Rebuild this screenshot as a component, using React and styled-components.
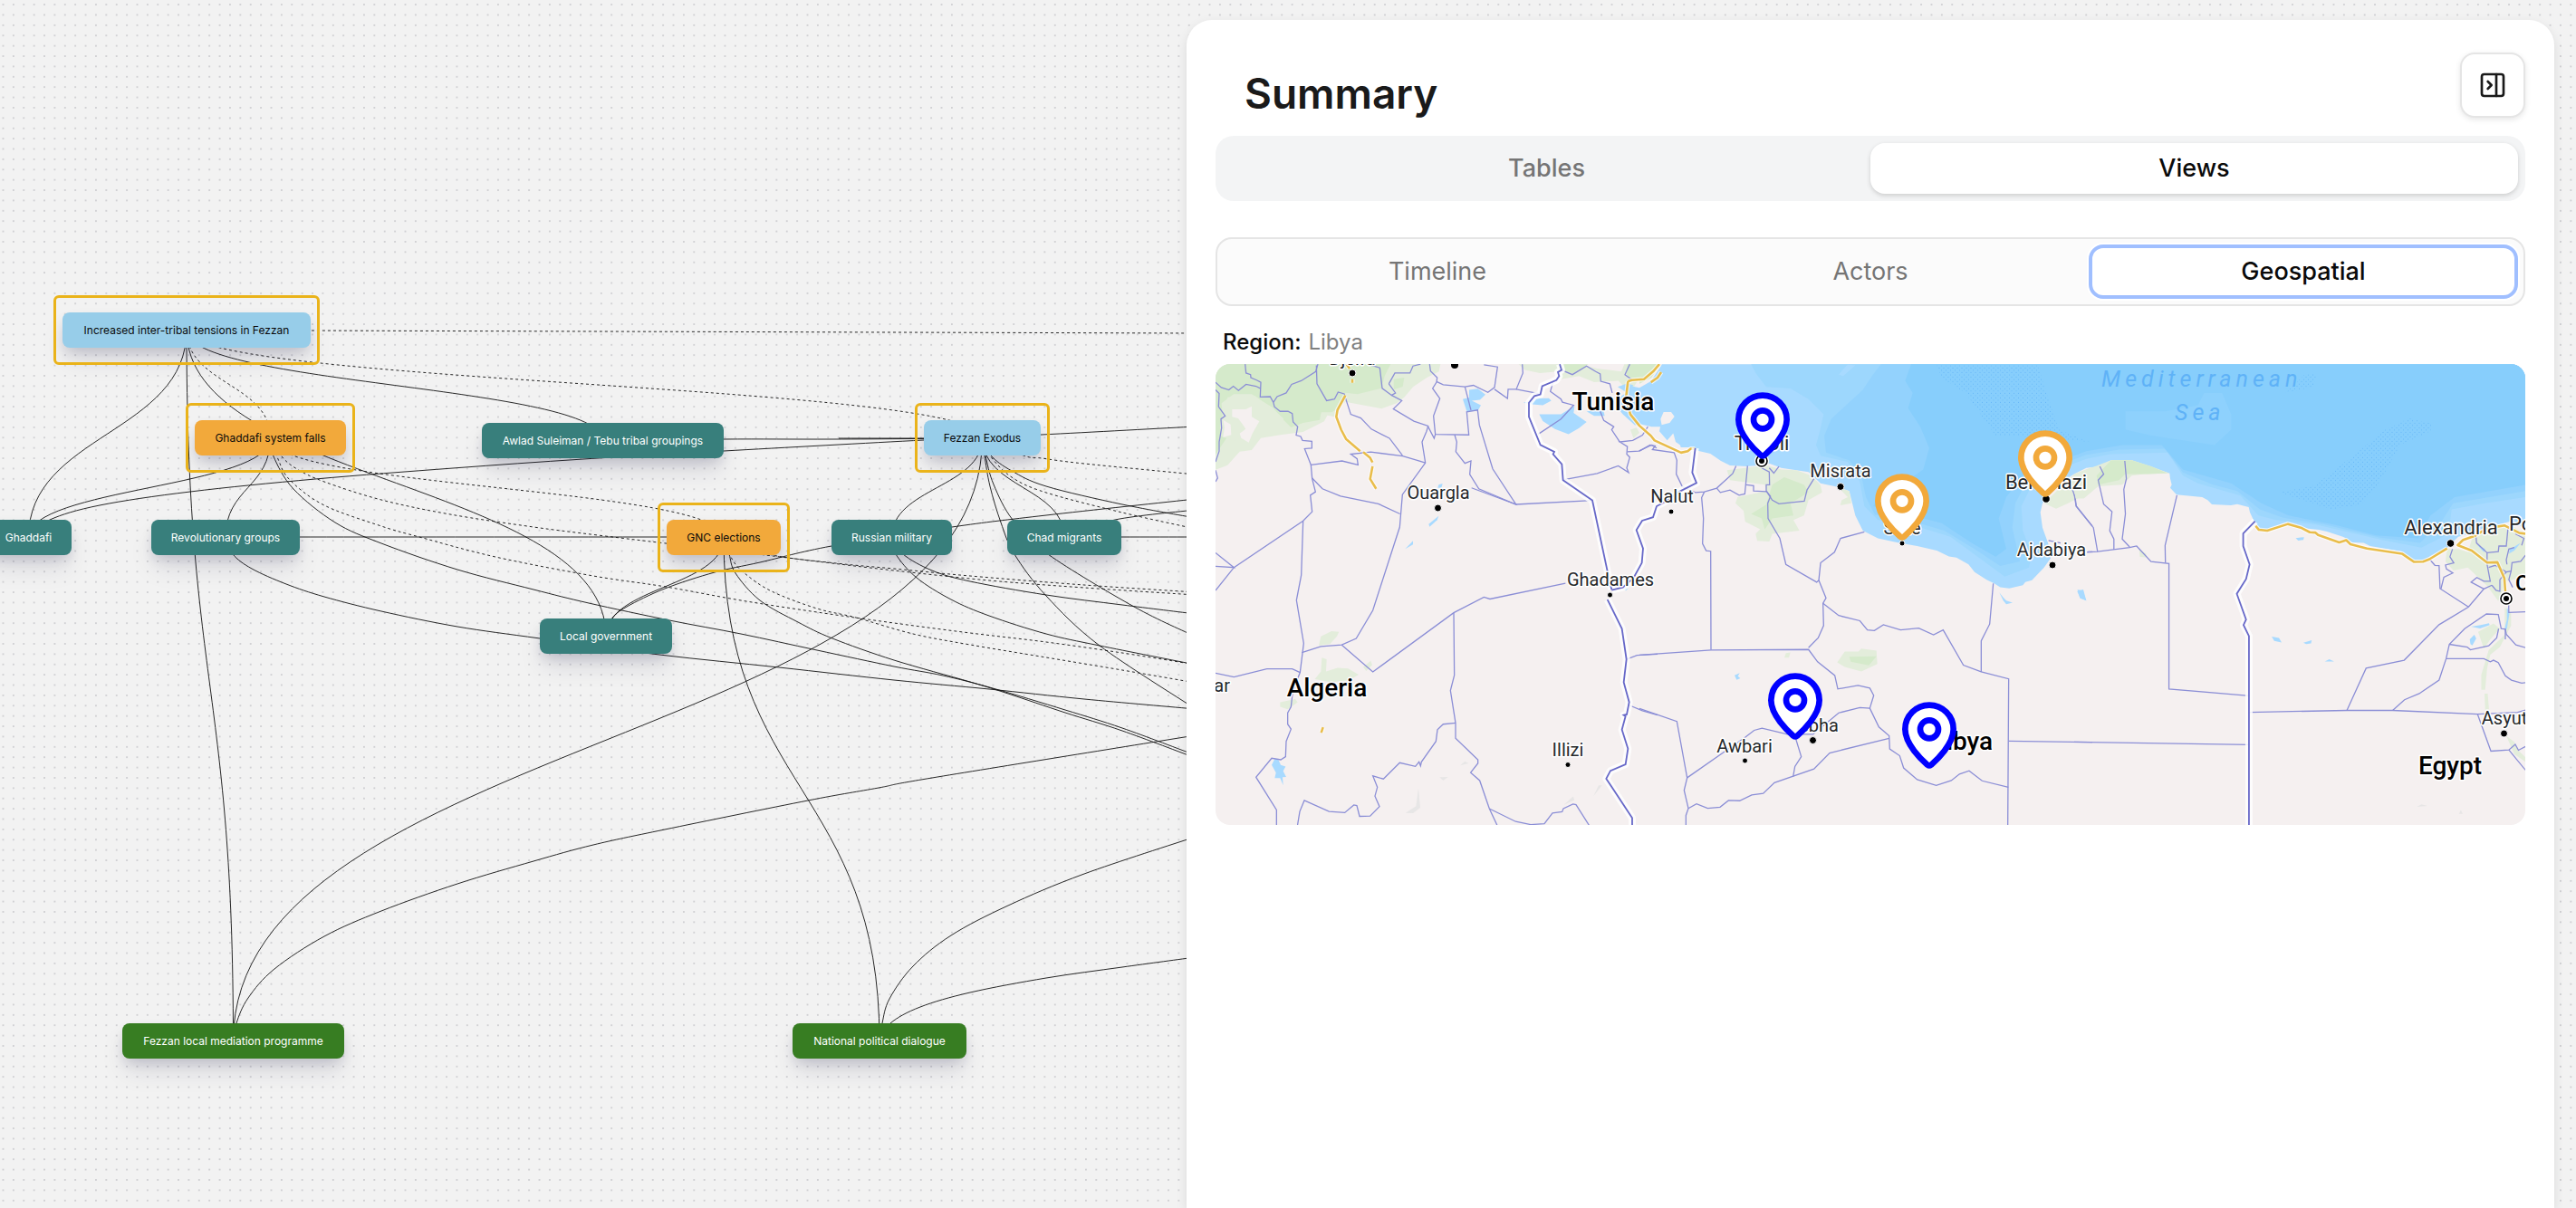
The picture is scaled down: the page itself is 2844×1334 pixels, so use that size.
import React, { useState } from "react";
import styled, { createGlobalStyle, css } from "styled-components";
import { MapPin, PanelRightClose } from "lucide-react";

const GlobalStyle = createGlobalStyle`
  *, *::before, *::after { box-sizing: border-box; }
  body {
    margin: 0;
    background: #f2f2f2;
    color: #0a0a0a;
    font-family: Inter, "Liberation Sans", sans-serif;
  }
  button { font: inherit; color: inherit; cursor: pointer; }
`;

const Page = styled.div`
  display: grid;
  height: 100vh;
  overflow: hidden;
`;

/* ---------- Canvas ---------- */

const Canvas = styled.section`
  grid-area: 1 / 1;
  position: relative;
  overflow: hidden;
  background: #f2f2f2;
`;

const Layer = styled.svg`
  position: absolute;
  inset: 0;
  width: 100%;
  height: 100%;
`;

const tones = {
  event: css`background: #97cde9; color: #0a0a0a;`,
  trigger: css`background: #f2a93b; color: #0a0a0a;`,
  actor: css`background: #387f7c; color: #ffffff;`,
  programme: css`background: #377d22; color: #ffffff;`,
};

const Node = styled.div`
  position: absolute;
  left: ${(p) => p.$x}px;
  top: ${(p) => p.$y}px;
  width: ${(p) => p.$w}px;
  height: 39px;
  display: flex;
  align-items: center;
  justify-content: center;
  border-radius: 8px;
  font-size: 12px;
  line-height: 16px;
  white-space: nowrap;
  box-shadow: 0 16px 28px -4px rgba(20, 20, 60, 0.13), 0 7px 14px -3px rgba(20, 20, 60, 0.16);
  ${(p) => tones[p.$tone]}
  ${(p) =>
    p.$selected &&
    css`
      &::after {
        content: "";
        position: absolute;
        inset: -19px -10px;
        border: 3px solid #eab31a;
        border-radius: 6px;
      }
    `}
`;

const nodes = [
  { id: "tensions", label: "Increased inter-tribal tensions in Fezzan", x: 69, y: 345, w: 274, tone: "event", selected: true },
  { id: "falls", label: "Ghaddafi system falls", x: 215, y: 464, w: 167, tone: "trigger", selected: true },
  { id: "awlad", label: "Awlad Suleiman / Tebu tribal groupings", x: 532, y: 467, w: 267, tone: "actor" },
  { id: "exodus", label: "Fezzan Exodus", x: 1020, y: 464, w: 129, tone: "event", selected: true },
  { id: "ghaddafi", label: "Ghaddafi", x: -16, y: 574, w: 95, tone: "actor" },
  { id: "groups", label: "Revolutionary groups", x: 167, y: 574, w: 164, tone: "actor" },
  { id: "gnc", label: "GNC elections", x: 736, y: 574, w: 126, tone: "trigger", selected: true },
  { id: "russian", label: "Russian military", x: 918, y: 574, w: 133, tone: "actor" },
  { id: "chad", label: "Chad migrants", x: 1112, y: 574, w: 126, tone: "actor" },
  { id: "local", label: "Local government", x: 596, y: 683, w: 146, tone: "actor" },
  { id: "mediation", label: "Fezzan local mediation programme", x: 135, y: 1130, w: 245, tone: "programme" },
  { id: "dialogue", label: "National political dialogue", x: 875, y: 1130, w: 192, tone: "programme" },
];

const center = (id) => {
  const n = nodes.find((item) => item.id === id);
  return [n.x + n.w / 2, n.y + 19.5];
};

const bezier = (from, to) => {
  const [sx, sy] = center(from);
  const [tx, ty] = center(to);
  const my = (sy + ty) / 2;
  return `M${sx},${sy}C${sx},${my} ${tx},${my} ${tx},${ty}`;
};

const spline = (pts) => {
  let d = `M${pts[0].join(",")}`;
  for (let i = 0; i < pts.length - 1; i += 1) {
    const p0 = pts[i - 1] || pts[i];
    const p1 = pts[i];
    const p2 = pts[i + 1];
    const p3 = pts[i + 2] || p2;
    d += `C${p1[0] + (p2[0] - p0[0]) / 6},${p1[1] + (p2[1] - p0[1]) / 6} ${p2[0] - (p3[0] - p1[0]) / 6},${p2[1] - (p3[1] - p1[1]) / 6} ${p2[0]},${p2[1]}`;
  }
  return d;
};

const links = [
  ["tensions", "ghaddafi"], ["tensions", "mediation"], ["tensions", "local"], ["tensions", "awlad"],
  ["tensions", "falls", true], ["tensions", "exodus", true],
  ["falls", "ghaddafi"], ["falls", "groups"], ["falls", "gnc", true],
  ["gnc", "local"], ["gnc", "dialogue"],
  ["exodus", "russian"], ["exodus", "chad"], ["exodus", "mediation"],
];

/* Links whose far end lies beyond the visible part of the canvas. */
const routes = [
  { pts: [[206, 364], [343, 365], [660, 366], [1320, 368]], dashed: true },
  { pts: [[32, 593], [55, 574], [110, 558], [210, 543], [348, 529], [500, 517], [644, 507], [799, 498], [1020, 486], [1150, 480], [1320, 471]] },
  { pts: [[665, 487], [799, 485], [920, 485], [1085, 484]] },
  { pts: [[926, 484], [1085, 484]] },
  { pts: [[299, 483], [302, 504], [324, 540], [370, 577], [421, 600], [505, 629], [589, 651], [650, 666], [739, 685], [818, 700], [902, 718], [987, 736], [1041, 746], [1096, 760], [1176, 784], [1239, 804], [1320, 834]] },
  { pts: [[299, 483], [311, 504], [328, 518], [358, 532], [421, 552], [497, 568], [589, 582], [660, 591], [735, 600], [837, 612], [902, 620], [987, 630], [1092, 641], [1197, 649], [1320, 657]], dashed: true },
  { pts: [[299, 483], [307, 507], [320, 530], [358, 558], [421, 581], [463, 593], [547, 615], [655, 636], [735, 648], [818, 663], [902, 676], [987, 688], [1071, 699], [1155, 709], [1239, 721], [1320, 734]], dashed: true },
  { pts: [[669, 702], [676, 683], [692, 670], [734, 650], [789, 632], [839, 621], [918, 603], [1051, 582], [1155, 569], [1320, 551]] },
  { pts: [[1175, 593], [1231, 574], [1320, 563]] },
  { pts: [[799, 593], [805, 612], [812, 633], [839, 663], [881, 687], [919, 705], [987, 729], [1071, 753], [1113, 766], [1176, 787], [1239, 807], [1320, 837]] },
  { pts: [[799, 593], [808, 617], [822, 633], [852, 653], [902, 672], [945, 682], [1008, 700], [1071, 712], [1155, 726], [1239, 740], [1320, 754]], dashed: true },
  { pts: [[799, 593], [848, 612], [923, 622], [987, 628], [1071, 636], [1197, 646], [1320, 654]], dashed: true },
  { pts: [[1085, 483], [1087, 503], [1093, 537], [1105, 577], [1120, 612], [1155, 658], [1214, 713], [1320, 783]] },
  { pts: [[1085, 483], [1088, 503], [1097, 535], [1118, 574], [1157, 612], [1252, 670], [1320, 703]] },
  { pts: [[1085, 483], [1094, 503], [1117, 520], [1155, 537], [1239, 557], [1320, 572]] },
  { pts: [[1085, 483], [1093, 503], [1117, 527], [1155, 544], [1239, 566], [1320, 584]], dashed: true },
  { pts: [[1085, 483], [1130, 503], [1150, 506], [1197, 512], [1320, 524]], dashed: true },
  { pts: [[984, 593], [989, 612], [1012, 638], [1050, 662], [1092, 680], [1155, 700], [1214, 713], [1320, 734]] },
  { pts: [[984, 593], [997, 612], [1029, 630], [1071, 642], [1155, 657], [1239, 668], [1320, 678]] },
  { pts: [[249, 593], [799, 593]] },
  { pts: [[1175, 593], [1320, 593]] },
  { pts: [[249, 593], [257, 612], [278, 628], [316, 645], [358, 659], [421, 675], [505, 692], [596, 705], [728, 723], [860, 737], [987, 751], [1092, 761], [1197, 772], [1320, 783]] },
  { pts: [[258, 1150], [261, 1130], [274, 1102], [303, 1070], [358, 1034], [421, 1006], [505, 976], [589, 951], [655, 933], [734, 916], [892, 884], [970, 870], [1029, 859], [1320, 812]] },
  { pts: [[971, 1150], [974, 1130], [982, 1103], [1008, 1067], [1050, 1033], [1113, 1000], [1197, 965], [1320, 924]] },
  { pts: [[971, 1150], [983, 1130], [1016, 1112], [1071, 1096], [1155, 1080], [1239, 1068], [1320, 1057]] },
];

function Graph() {
  return (
    <Canvas aria-label="Conflict graph">
      <Layer aria-hidden="true">
        <defs>
          <pattern id="dots" x="-2.2" y="-0.6" width="11.385" height="11.385" patternUnits="userSpaceOnUse">
            <circle cx="5.69" cy="5.69" r="0.6" fill="#91919a" />
          </pattern>
        </defs>
        <rect width="100%" height="100%" fill="url(#dots)" />
        <g fill="none" stroke="#111111" strokeWidth="0.9">
          {links.map(([from, to, dashed]) => (
            <path key={from + to} d={bezier(from, to)} strokeDasharray={dashed ? "3 3" : undefined} />
          ))}
          {routes.map((route, i) => (
            <path key={i} d={spline(route.pts)} strokeDasharray={route.dashed ? "3 3" : undefined} />
          ))}
        </g>
      </Layer>
      {nodes.map((n) => (
        <Node key={n.id} $x={n.x} $y={n.y} $w={n.w} $tone={n.tone} $selected={n.selected}>
          {n.label}
        </Node>
      ))}
    </Canvas>
  );
}

/* ---------- Map ---------- */

const MapFrame = styled.div`
  height: 509px;
  border-radius: 16px;
  overflow: hidden;
  background: #f5f0f0;
`;

const MapDrawing = styled.svg`
  display: block;
  width: 100%;
  height: 100%;

  polyline { vector-effect: non-scaling-stroke; }
  .thin { fill: none; stroke: #8b8ed6; stroke-width: 1.3; }
  .halo { fill: none; stroke: #ffffff; stroke-width: 8; stroke-linejoin: round; opacity: 0.85; }
  .country { fill: none; stroke: #6768c8; stroke-width: 1.8; }
  .casing { fill: none; stroke: #ffffff; stroke-width: 5; stroke-linejoin: round; opacity: 0.7; }
  .road { fill: none; stroke: #e9bd4b; stroke-width: 2.6; stroke-linejoin: round; }
  .land { fill: #f5f0f0; }
  .lake { fill: #a8daff; }
  .park { fill: #e3eddb; }
  .wood { fill: #d5eacb; }
  .sand { fill: #e7e6e6; }
`;

const PlaceLabel = styled.text`
  font-family: Roboto, "Liberation Sans", sans-serif;
  font-size: ${(p) => p.$size}px;
  font-weight: ${(p) => (p.$bold ? 500 : 400)};
  fill: ${(p) => (p.$bold ? "#000000" : "#26292b")};
  stroke: #ffffff;
  stroke-width: 3px;
  stroke-linejoin: round;
  paint-order: stroke;
`;

const SeaLabel = styled.text`
  font-family: Roboto, "Liberation Sans", sans-serif;
  font-size: 25px;
  font-style: italic;
  letter-spacing: 5px;
  fill: #5fb2f7;
`;

const tile = {
  northwest: "scale(0.33333)",
  west: "translate(-12 -12) scale(0.33333 0.33806)",
  central: "translate(468 -12) scale(0.33333 0.33806)",
  east: "translate(948 -12) scale(0.35336 0.33806)",
};

const sea =
  "75,36 65,52 38,92 0,113 -25,108 -45,130 -75,150 -75,175 -55,200 -15,235 5,232 40,240 75,240 70,215 80,192 105,192 116,207 100,228 70,235 66,255 92,285 112,262 120,290 135,300 137,308 175,308 190,318 235,328 270,352 300,367 355,370 400,366 430,360 470,375 520,382 560,388 600,425 660,438 695,450 705,490 715,530 740,580 790,605 860,620 920,630 985,645 1025,664 1050,668 1090,690 1110,715 1150,740 1175,752 1195,765 1225,768 1270,758 1278,748 1300,742 1340,700 1362,670 1355,625 1335,570 1328,520 1335,490 1350,470 1400,420 1440,395 1480,375 1525,370 1562,350 1631,350 1694,372 1756,393 1758,410 1763,430 1758,440 1779,462 1864,470 1882,480 1896,494 1959,497 1980,493 2018,503 2022,520 2036,550 2055,576 2076,575 2145,552 2214,573 2250,577 2277,583 2300,590 2330,600 2341,605 2360,618 2399,620 2420,630 2526,648 2560,676 2595,676 2675,635 2712,600 2765,585 2807,570 2882,550 2935,570 2935,36";
const seaMid =
  "370,36 385,65 420,110 500,115 560,150 610,200 600,245 585,300 600,335 690,355 730,420 745,500 790,545 900,560 1030,600 1120,665 1210,730 1290,700 1300,660 1270,580 1265,500 1300,430 1400,375 1480,345 1560,330 1750,325 1800,400 1850,425 1990,465 2050,530 2110,545 2240,560 2460,610 2590,635 2680,590 2690,510 2800,490 2935,470 2935,36";
const seaLow =
  "800,36 770,75 740,120 690,165 635,215 612,270 618,325 695,350 735,400 750,470 780,528 890,545 1010,580 1110,640 1195,695 1260,680 1235,570 1245,490 1285,415 1400,362 1480,332 1590,315 1740,312 1800,390 1900,430 1980,450 2055,510 2130,537 2270,560 2450,602 2585,620 2650,560 2695,490 2935,450 2935,36";
const seaDeep =
  "900,36 880,90 905,130 890,180 930,240 960,310 940,380 880,420 800,440 775,500 880,525 1000,555 1100,620 1180,665 1215,640 1190,540 1215,470 1270,400 1400,350 1480,320 1600,300 1730,300 1800,380 1960,425 2060,490 2150,530 2300,560 2440,595 2580,605 2620,530 2700,470 2935,430 2935,36";

const places = [
  { t: "Djelfa", x: 151, y: 1, size: 20, dot: [151, 10, 4] },
  { t: "Tunisia", x: 439, y: 51, size: 28, bold: true },
  { t: "Ouargla", x: 246, y: 149, size: 20, dot: [245.5, 159, 4] },
  { t: "Ghadames", x: 436, y: 245, size: 20, dot: [435.5, 255, 3] },
  { t: "Algeria", x: 123, y: 367, size: 28, bold: true },
  { t: "Illizi", x: 389, y: 433, size: 20, dot: [389, 442.5, 3] },
  { t: "Nalut", x: 504, y: 153, size: 20, dot: [503, 163, 3] },
  { t: "Tripoli", x: 603, y: 95, size: 22 },
  { t: "Misrata", x: 690, y: 125, size: 20, dot: [690, 135.5, 4] },
  { t: "Sirte", x: 758, y: 188, size: 20, dot: [758, 198, 3] },
  { t: "Benghazi", x: 917, y: 138, size: 22, dot: [917, 149, 4.3] },
  { t: "Ajdabiya", x: 923, y: 212, size: 20, dot: [924, 222, 4] },
  { t: "Sebha", x: 660, y: 406, size: 20, dot: [659.5, 415.5, 4] },
  { t: "Awbari", x: 584, y: 429, size: 20, dot: [584.5, 438, 3] },
  { t: "Libya", x: 825, y: 426, size: 28, bold: true },
  { t: "Alexandria", x: 1364, y: 188, size: 22, dot: [1363.5, 198, 4.3] },
  { t: "Asyut", x: 1423, y: 398, size: 20, dot: [1422.5, 408, 4] },
  { t: "Egypt", x: 1363, y: 453, size: 28, bold: true },
];

const pins = [
  { x: 564, y: 28, color: "#0000ff" },
  { x: 718, y: 118, color: "#f2a93b" },
  { x: 876, y: 70, color: "#f2a93b" },
  { x: 600, y: 338, color: "#0000ff" },
  { x: 748, y: 370, color: "#0000ff" },
];

const Lines = ({ kind, items }) => items.map((pts) => <polyline key={pts} className={kind} points={pts} />);
const Areas = ({ kind, items }) => items.map((pts) => <polygon key={pts} className={kind} points={pts} />);
const Roads = ({ items }) => (
  <>
    <Lines kind="casing" items={items} />
    <Lines kind="road" items={items} />
  </>
);

const tunisiaBorder =
  "1176,36 1182,55 1170,62 1174,75 1165,88 1118,108 1112,135 1092,140 1074,162 1074,208 1112,300 1158,322 1154,330 1183,363 1187,415 1284,481 1340,740 1348,772";
const nalutBorder = "1625,310 1615,390 1629,424 1577,450 1520,488 1497,500 1485,536 1449,547 1430,578 1452,638 1448,685 1420,735 1385,765 1348,774";
const ghatBorder =
  "1334,805 1382,900 1397,1000 1388,1075 1406,1140 1398,1180 1388,1182 1394,1186 1382,1230 1402,1292 1394,1343 1344,1364 1330,1390 1416,1518 1416,1545";
const egyptBorder = "565,549 528,589 528,630 548,690 537,738 508,786 537,870 529,888 546,924 546,1545";

function LibyaMap() {
  return (
    <MapFrame>
      <MapDrawing viewBox="0 0 1446 509" preserveAspectRatio="xMidYMid slice" role="img" aria-label="Map of Libya">
        <defs>
          <pattern id="depth" width="5" height="5" patternUnits="userSpaceOnUse" patternTransform="scale(3 3)">
            <circle cx="1" cy="1" r="0.45" fill="#4ea6f5" />
            <circle cx="3.5" cy="3.5" r="0.45" fill="#4ea6f5" />
          </pattern>
        </defs>

        <g transform={tile.northwest}>
          <Areas kind="park" items={["0,0 745,0 740,25 700,45 655,75 625,110 600,130 550,148 430,125 400,150 395,175 370,170 360,190 290,225 215,235 150,245 120,285 80,290 40,335 0,350"]} />
          <Areas kind="wood" items={["0,0 580,0 560,40 550,80 470,100 430,95 425,125 400,150 385,160 350,160 345,185 290,195 250,210 220,180 190,145 150,120 120,100 60,100 20,130 25,190 40,240 0,300", "590,50 625,45 620,75 590,85"]} />
          <Areas kind="park" items={["40,110 130,105 190,150 225,180 220,205 180,205 170,235 120,230 60,255 20,240 15,200"]} />
          <Areas kind="land" items={["55,150 100,150 120,140 120,175 145,190 122,230 110,260 85,245 80,230 100,215 90,200 75,180 55,175", "25,185 50,200 52,235 25,242 30,210"]} />
        </g>

        <g transform={tile.west}>
          <Areas
            kind="park"
            items={[
              "1040,36 1240,36 1300,50 1380,60 1390,36 1500,36 1440,80 1410,130 1370,90 1290,95 1240,75 1180,85 1170,60 1110,65 1060,55",
              "378,955 385,925 420,908 445,910 438,925 415,950",
              "388,995 404,1000 402,1040 440,1028 475,1030 510,1050 480,1068 420,1075 365,1065 385,1040",
              "250,1140 300,1130 308,1140 275,1163 250,1155",
              "525,1025 550,1005 555,1018 535,1038",
              "1410,250 1430,243 1440,260 1420,278",
            ]}
          />
          <Areas kind="wood" items={["1180,36 1270,36 1245,55 1220,65 1185,60", "1400,36 1500,36 1450,85 1410,85 1395,65"]} />
          <Areas
            kind="lake"
            items={[
              "876,120 905,116 930,135 912,152 885,155 915,170 905,188 868,190 855,150 876,145",
              "1055,162 1090,155 1095,148 1140,147 1148,155 1120,170 1085,167",
              "1108,200 1180,200 1225,172 1222,195 1265,225 1240,245 1205,265 1160,248 1120,222",
              "1265,190 1320,185 1325,205 1290,205",
              "1368,110 1400,98 1420,105 1400,130",
              "775,430 788,426 784,440 772,440",
              "742,558 775,532 770,545 745,567",
              "664,640 690,613 690,625",
              "232,1325 245,1330 252,1345 268,1350 260,1365 270,1384 258,1385 260,1412 250,1388 232,1388 236,1370 222,1345",
              "1380,765 1402,768 1395,776",
            ]}
          />
          <Areas kind="sand" items={["708,1420 714,1485 690,1503 665,1502 700,1480", "778,1385 806,1384 790,1396", "846,1347 862,1333 874,1340", "1190,1475 1220,1448 1225,1460", "1287,1448 1305,1412 1316,1412"]} />
          <Lines
            kind="thin"
            items={[
              "134,36 137,65 152,70 153,80 172,88 186,95 184,143 217,142 228,162 231,175 250,190 276,190 290,197 293,225 308,240 303,268 318,272 324,285 355,288 355,310 331,312 352,365 356,410 367,453 350,464 356,518 326,548 97,700 36,775",
              "36,95 55,112 80,120 95,108 112,122 137,102 170,108 184,115",
              "36,120 48,132 46,175 68,205 54,215 56,245 48,290 48,320 36,355",
              "36,382 43,408 36,420",
              "228,160 240,142 270,130 288,102 320,90 368,60 375,36",
              "370,40 372,100 404,155 430,150 442,127 462,133 484,200 517,212 552,248 612,278 655,334",
              "540,36 580,48 588,115 620,138 653,155 625,182 693,222 740,238 735,255 720,290 731,358 655,462 646,568 557,840 502,932 454,953 385,958 322,978",
              "352,365 455,352 508,365 505,345 484,330 550,323 656,336 731,358",
              "356,408 390,443 450,467 575,492 647,525",
              "326,548 320,725 304,807 328,948 316,1043 306,1068 290,1120 286,1155 275,1175 275,1212 286,1228 270,1268 268,1318 252,1328 222,1323 170,1385 238,1492 238,1545",
              "36,652 97,700 36,696",
              "36,1045 97,1058 206,1031 290,1031 316,1043",
              "454,953 557,1041 825,848 925,797 945,803 1195,752",
              "825,848 827,1052 814,1102 831,1208 831,1258 905,1328 905,1340 881,1370 911,1396 943,1488 970,1545",
              "831,1208 790,1212 771,1230 766,1268 718,1335 715,1348 710,1335 698,1350 646,1338 592,1391 557,1381 572,1418 564,1447 579,1481 548,1512 513,1513 504,1478 494,1476 464,1501 412,1497 330,1461 315,1497 307,1545",
              "943,1488 1030,1530 1080,1540 1125,1537 1152,1502 1184,1498 1188,1488 1220,1473 1230,1475 1275,1545",
              "745,36 748,58 770,80 768,95 755,115 779,148 758,205 764,265 875,267 868,192 904,186 910,235 954,378 1031,494 884,440",
              "740,240 760,278 764,265",
              "768,93 790,103 862,110 890,105 938,128 960,112 970,45 925,38",
              "862,110 882,186",
              "960,118 1003,148 1005,118 1032,118 1054,65 1052,36",
              "1032,118 1110,133",
              "828,267 835,290 832,322 862,360 882,352 878,396 908,443 1031,494 1284,481",
              "1104,265 1180,215 1222,170 1185,160 1180,150 1145,125 1155,90",
              "1187,414 1300,393 1370,368 1404,390 1398,375 1408,340 1398,330 1400,305 1375,290 1418,285 1450,268 1468,240",
              "1400,322 1438,320 1480,300 1497,310",
              "1375,290 1348,250 1355,240 1322,220 1310,190",
              "1182,55 1218,70 1265,42 1295,60 1310,68 1312,92 1342,100 1350,130",
              "610,100 630,65 680,65 690,42 715,36",
              "610,100 632,130 618,138",
              "1408,36 1392,70 1420,90",
              "1397,1000 1432,987 1500,983",
              "1406,1150 1450,1168 1500,1182",
            ]}
          />
          <Roads items={["466,138 440,185 436,208 452,250 468,280 515,320", "525,323 548,342 556,357", "556,370 548,411 568,443", "489,85 489,97", "470,36 480,50", "392,1222 386,1240"]} />
        </g>

        <g transform={tile.central}>
          <polygon points={sea} fill="#a8daff" />
          <polygon points={seaMid} fill="#9dd7fd" />
          <polygon points={seaLow} fill="#93d2fd" />
          <polygon points={seaDeep} fill="#87cefc" />
          <polygon points="660,70 690,36 715,40 675,75" fill="#a8daff" />
          <polygon points="1610,190 1740,190 1850,170 1870,130 1930,130 1960,200 1960,250 1905,300 1700,270 1610,250" fill="#8ed1fd" />
          <polygon points="985,40 1320,40 1345,120 1390,250 1490,290 1440,285 1350,275 1180,270 1080,130 1000,80" fill="url(#depth)" />
          <polygon points="2550,212 2625,230 2620,255 2520,300 2440,440 2390,495 2290,510 2120,455 2240,430 2370,330 2470,250" fill="url(#depth)" />
          <polygon points="2200,72 2245,64 2230,110 2140,130" fill="url(#depth)" />
          <Areas
            kind="park"
            items={[
              "290,382 420,366 470,380 520,382 570,400 600,432 605,455 560,480 545,530 510,545 530,580 440,590 430,615 390,613 385,590 400,575 350,550 345,515 318,490 325,470 420,450 415,430 300,415",
              "660,440 695,450 702,490 665,497 670,480 690,470",
              "655,1010 680,975 725,975 735,965 785,972 788,1015 735,1040 680,1025",
              "480,995 485,980 500,978 495,995",
              "1340,490 1440,395 1500,372 1500,450 1420,490 1380,508",
            ]}
          />
          <Areas kind="wood" items={["370,525 420,495 440,430 480,405 545,430 560,455 500,490 510,530 440,540 415,575 405,540", "695,992 785,990 760,1020 700,1008", "0,36 68,36 40,80 0,100"]} />
          <Areas kind="lake" items={["1192,782 1205,798 1215,808 1236,815 1215,820 1205,808", "1450,778 1470,772 1475,790 1480,808 1460,800", "315,1052 332,1045 326,1055 334,1062 322,1067"]} />
          <Lines
            kind="thin"
            items={[
              "0,320 35,300 52,303 43,315 115,325 124,350 122,395 142,436 185,455 215,453 256,441 309,393 320,368",
              "256,441 268,455 300,447 330,464 349,460 358,368",
              "354,430 378,433 378,450 420,452 420,430 431,430 430,388 405,375",
              "430,375 445,392 462,370",
              "215,453 206,472 212,540 209,622 221,645 236,647 237,969",
              "0,986 237,970 560,968 590,1008 647,1053 657,1097 724,1085 763,1094 776,1118 763,1160 793,1221 827,1250 829,1293 862,1315 875,1355 920,1393 983,1412 1033,1396 1060,1375 1092,1364 1135,1397 1222,1418",
              "420,450 434,468 425,490 426,540 465,605 485,690 587,748 594,742 600,685 646,650 666,605 745,584",
              "420,450 440,480 462,492 546,483 555,447 578,410",
              "594,742 618,800 608,817 610,890 592,930 560,962",
              "608,817 660,857 730,874 755,904 778,906 808,887 865,904 925,898 974,920 1006,904 1073,1019 1132,1041 1223,1064 1220,1545",
              "1172,752 1160,885 1132,940 1132,1041",
              "1223,1267 1500,1271",
              "0,1161 124,1203 158,1387 148,1428 162,1487 154,1510 154,1545",
              "158,1387 280,1303 350,1255 380,1232 406,1225 490,1245 575,1245 660,1175 730,1158 763,1160",
              "518,1260 536,1318 515,1350 509,1383",
              "162,1487 189,1472 226,1487 267,1483 295,1461 332,1462 372,1443 410,1438 447,1403 578,1358 630,1306 827,1258",
              "1355,612 1395,620",
              "1485,649 1500,649",
              "1432,440 1443,470 1447,500 1500,565",
            ]}
          />
          <Roads items={["-38,92 -25,88 15,85 45,60 66,36", "38,95 60,80 72,62", "-38,92 -45,150 -30,200 0,237 38,270 50,285 138,325 160,320 170,312 184,313"]} />
        </g>

        <g transform={tile.east}>
          <Areas
            kind="park"
            items={[
              "0,395 60,372 115,350 180,350 240,370 298,393 220,395 180,400 150,430 75,435 30,475 0,475",
              "1165,640 1200,640 1230,650 1245,600 1290,570 1360,560 1410,590 1410,730 1350,745 1325,810 1290,760 1230,700 1185,710 1160,680",
              "1262,910 1310,883 1330,900 1300,935 1280,965",
              "1345,830 1365,850 1365,890 1330,960 1300,985 1290,1030 1284,1100 1272,1100 1272,1050 1295,970 1345,920",
              "1282,1112 1292,1112 1296,1165 1284,1165",
              "1350,1250 1375,1270 1390,1300 1410,1320 1410,1335 1375,1310",
              "203,640 225,655 225,668 205,665",
            ]}
          />
          <Areas kind="wood" items={["70,400 115,350 180,350 240,370 290,392 230,395 160,395 140,415 75,430"]} />
          <Areas
            kind="lake"
            items={[
              "10,773 28,775 30,790 38,808 18,800",
              "692,604 718,601 716,610 700,612",
              "617,926 640,930 648,945 625,940",
              "716,946 742,938 740,948 725,950",
              "783,1007 797,1000 812,1007",
              "1240,893 1270,888 1296,882 1298,888 1268,899",
              "1236,935 1250,920 1256,932 1244,955 1238,950",
              "1352,830 1360,850 1352,900 1344,903 1352,870",
              "1258,625 1284,640 1280,650",
              "1362,640 1395,620 1375,645 1358,655",
            ]}
          />
          <Areas kind="sand" items={["1070,1482 1085,1474 1104,1479", "1202,1505 1208,1492 1214,1505"]} />
          <Lines
            kind="thin"
            items={[
              "0,460 6,500 60,570 73,648",
              "80,370 92,395 75,415 92,493 118,518 111,580 124,607 124,642",
              "158,352 163,410 155,445 160,525 150,607 173,633",
              "40,650 73,648 173,635 195,630 240,681 296,687 296,1097 547,1119",
              "321,464 284,628 285,685",
              "0,1270 547,1279",
              "547,1173 852,1167 995,1167 1260,1179 1385,1173 1410,1166",
              "852,1167 912,1029 1031,1003 1140,887 1232,829 1280,770 1305,758",
              "995,1167 1032,1132 1078,1112 1140,1068 1162,998 1172,951 1220,900 1288,852 1325,854 1334,900 1347,902 1350,918 1380,953 1410,962",
              "1172,951 1228,960 1238,969 1295,956 1320,930 1326,900",
              "1162,998 1280,998 1300,1008 1310,1003 1325,1011 1347,1054 1366,1068 1398,1078 1410,1076",
              "1110,673 1127,693 1140,694 1143,769 1232,829",
              "1182,640 1174,665 1186,685 1160,692 1163,705 1183,718 1155,732 1146,769",
              "1347,900 1347,935",
              "1260,1179 1302,1300 1358,1296 1378,1278 1388,1297 1410,1285",
              "1358,1296 1410,1362",
              "1357,800 1358,847 1410,845",
              "1255,595 1257,620 1290,652 1325,648 1327,630 1350,630 1355,575",
              "1290,652 1290,690 1300,745 1280,745 1258,733 1240,748 1280,770",
              "1295,700 1315,693 1350,715 1330,740 1330,778 1318,775 1305,758",
              "1350,715 1365,712 1368,684 1395,680 1410,660",
              "1365,712 1358,740 1370,765",
              "1352,690 1350,675 1358,640 1375,635",
              "1378,590 1405,605 1398,628",
            ]}
          />
          <Roads
            items={[
              "565,562 577,577 603,580 668,558 708,570 736,585 753,586 762,594 828,618 850,611 863,624 915,638 1024,655 1062,682 1090,681 1110,673 1165,638",
              "1248,598 1215,610 1198,627 1242,645 1290,684 1322,683 1344,735 1347,778",
              "1250,598 1290,572 1345,563 1390,587 1410,590",
            ]}
          />
        </g>

        <g transform={tile.west}>
          <Lines kind="halo" items={[tunisiaBorder, nalutBorder, ghatBorder]} />
          <Lines kind="country" items={[tunisiaBorder, nalutBorder, ghatBorder]} />
        </g>
        <g transform={tile.east}>
          <polyline className="halo" points={egyptBorder} />
          <polyline className="country" points={egyptBorder} />
        </g>

        <SeaLabel x="978" y="25">Mediterranean</SeaLabel>
        <SeaLabel x="1059" y="62">Sea</SeaLabel>

        {places.map((p) => (
          <g key={p.t}>
            {p.dot && <circle cx={p.dot[0]} cy={p.dot[1]} r={p.dot[2]} fill="#000000" stroke="#ffffff" strokeWidth="1" />}
            <PlaceLabel x={p.x} y={p.y} $size={p.size} $bold={p.bold} textAnchor="middle">{p.t}</PlaceLabel>
          </g>
        ))}
        <circle cx="264" cy="1" r="4" />
        <PlaceLabel x="16" y="362" $size={20} textAnchor="end">ar</PlaceLabel>
        <PlaceLabel x="1428" y="184" $size={22}>Po</PlaceLabel>
        <PlaceLabel x="1435" y="250" $size={24} $bold>C</PlaceLabel>
        {[[603, 107], [1425, 259]].map(([cx, cy]) => (
          <g key={cx}>
            <circle cx={cx} cy={cy} r="6" fill="#ffffff" stroke="#ffffff" strokeWidth="4" />
            <circle cx={cx} cy={cy} r="6" fill="#ffffff" stroke="#000000" strokeWidth="1.6" />
            <circle cx={cx} cy={cy} r="3" />
          </g>
        ))}
        {pins.map((pin) => (
          <MapPin key={pin.x} x={pin.x} y={pin.y} size={80} color={pin.color} fill="#ffffff" />
        ))}
      </MapDrawing>
    </MapFrame>
  );
}

/* ---------- Summary panel ---------- */

const Panel = styled.aside`
  grid-area: 1 / 1;
  justify-self: end;
  z-index: 1;
  width: calc(50vw + 88px);
  margin: 22px 24px 0 0;
  padding: 36px 32px;
  border-radius: 28px 28px 0 0;
  background: #ffffff;
  box-shadow: 0 4px 12px rgba(0, 0, 0, 0.1);
`;

const Header = styled.header`
  display: flex;
  align-items: flex-end;
  justify-content: space-between;
  padding-left: 32px;
  margin-bottom: 20px;
`;

const Title = styled.h2`
  margin: 0;
  color: #1a1a1a;
  font-size: 46px;
  font-weight: 600;
  line-height: 54px;
`;

const IconButton = styled.button`
  display: grid;
  place-items: center;
  width: 72px;
  height: 72px;
  padding: 0;
  border: 2px solid #e5e5e5;
  border-radius: 16px;
  background: #ffffff;
  color: #1a1a1a;
  box-shadow: 0 2px 6px rgba(0, 0, 0, 0.1);
`;

const TabBar = styled.div`
  display: grid;
  grid-auto-flow: column;
  grid-auto-columns: minmax(0, 1fr);
`;

const SegmentBar = styled(TabBar)`
  padding: 8px;
  margin-bottom: 40px;
  border-radius: 20px;
  background: #f3f4f5;
`;

const ViewBar = styled(TabBar)`
  gap: 4px;
  padding: 6px;
  margin-bottom: 28px;
  border: 2px solid #e5e5e5;
  border-radius: 18px;
  background: #fbfbfb;
`;

const Tab = styled.button`
  height: 56px;
  padding: 0;
  border: 0;
  border-radius: 16px;
  background: transparent;
  color: #757575;
  font-size: 27px;
  line-height: 40px;
  ${(p) =>
    p.$active &&
    css`
      background: #ffffff;
      color: #0a0a0a;
      font-weight: 500;
      box-shadow: 0 2px 5px rgba(0, 0, 0, 0.16);
    `}
`;

const SegmentTab = styled(Tab)`
  font-weight: 500;
`;

const ViewTab = styled(Tab)`
  height: 60px;
  ${(p) =>
    p.$active &&
    css`
      border: 4px solid #a0bfff;
      box-shadow: 0 0 0 2px #ffffff;
    `}
`;

const Region = styled.p`
  display: flex;
  gap: 8px;
  margin: 0 0 12px;
  padding: 0 8px;
  font-size: 24px;
  line-height: 24px;
`;

const RegionName = styled.strong`
  font-weight: 500;
`;

const RegionValue = styled.span`
  color: #808080;
`;

export default function App() {
  const [segment, setSegment] = useState("Views");
  const [view, setView] = useState("Geospatial");
  return (
    <Page>
      <GlobalStyle />
      <Graph />
      <Panel>
        <Header>
          <Title>Summary</Title>
          <IconButton type="button" aria-label="Close panel">
            <PanelRightClose size={32} />
          </IconButton>
        </Header>
        <SegmentBar role="tablist" aria-label="Summary mode">
          {["Tables", "Views"].map((name) => (
            <SegmentTab key={name} type="button" role="tab" aria-selected={segment === name} $active={segment === name} onClick={() => setSegment(name)}>
              {name}
            </SegmentTab>
          ))}
        </SegmentBar>
        <ViewBar role="tablist" aria-label="View">
          {["Timeline", "Actors", "Geospatial"].map((name) => (
            <ViewTab key={name} type="button" role="tab" aria-selected={view === name} $active={view === name} onClick={() => setView(name)}>
              {name}
            </ViewTab>
          ))}
        </ViewBar>
        <Region>
          <RegionName>Region:</RegionName>
          <RegionValue>Libya</RegionValue>
        </Region>
        <LibyaMap />
      </Panel>
    </Page>
  );
}
